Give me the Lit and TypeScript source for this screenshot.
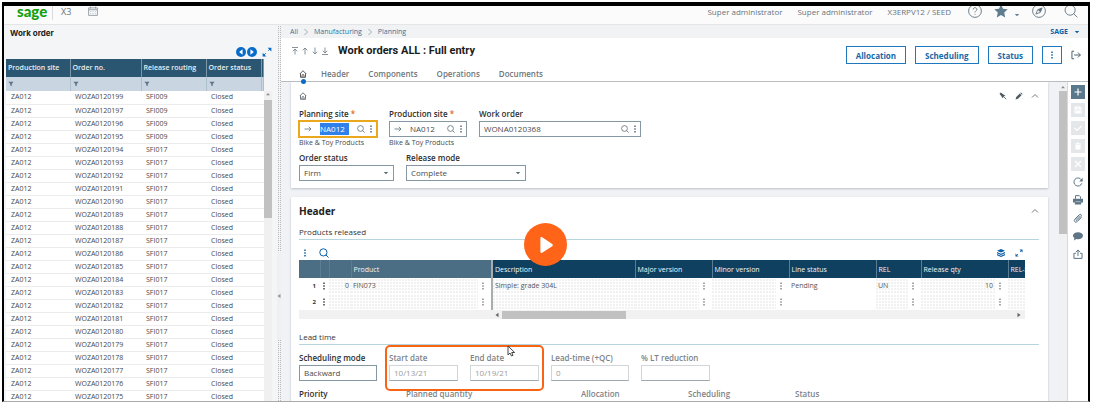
import { LitElement, html, css, svg, nothing } from "lit";
import { customElement } from "lit/decorators.js";
import { classMap } from "lit/directives/class-map.js";

const shapes: Record<string, unknown> = {
  arrow: svg`<path d="M1 8h13M9.5 3.5 14 8l-4.500 4.500" />`,
  search: svg`<circle cx="7" cy="7" r="5.800" /><path d="m11 11 4.300 4.300" />`,
  home: svg`<path d="M1.500 8 8 1.500 14.500 8M3 7v7.500h10V7M6 14.500v-3.500a2 2 0 0 1 4 0v3.500" />`,
  up: svg`<path d="M8 15V2M3.500 6.500 8 2l4.500 4.500" />`,
  down: svg`<path d="M8 1v13M3.500 9.500 8 14l4.500-4.500" />`,
  first: svg`<path d="M2 1h12M8 15V4M3.500 8.500 8 4l4.500 4.500" />`,
  last: svg`<path d="M2 15h12M8 1v11M3.500 7.500 8 12l4.500-4.500" />`,
  chevron: svg`<path d="m5 2 6 6-6 6" />`,
  collapse: svg`<path d="m2 11 6-6 6 6" />`,
  calendar: svg`<path d="M1 3h14v12H1zM1 6h14M4 1v3M12 1v3M4 9h1M7.500 9h1M11 9h1M4 12h1M7.500 12h1M11 12h1" />`,
  help: svg`<circle cx="8" cy="8" r="7.300" /><path d="M5.900 6.300c0-3 4.300-2.700 4.200-.1 0 1.400-2.100 1.700-2.100 3.300M8 11.200v1" />`,
  compass: svg`<circle cx="8" cy="8" r="7.300" /><path d="m11.500 4.500-2 5-5 2 2-5z" /><path class="solid" d="m11.500 4.500-2 5-3-3z" />`,
  star: svg`<path class="solid" d="m8 .5 2.300 5 5.400.6-4 3.700 1.100 5.500L8 12.600l-4.800 2.700 1.100-5.500-4-3.700 5.400-.6z" />`,
  caret: svg`<path class="solid" d="M2 5h12l-6 6z" />`,
  triUp: svg`<path class="solid" d="M3 11h10L8 5z" />`,
  triLeft: svg`<path class="solid" d="M12 2v12L4 8z" />`,
  triRight: svg`<path class="solid" d="M4 2v12l8-6z" />`,
  exit: svg`<path d="M5 2H1.500v12H5M5 8h10M11 4l4 4-4 4" />`,
  filter: svg`<path class="solid" d="M1 2h14l-5 6v6l-4-2V8z" />`,
  prev: svg`<circle class="solid" cx="8" cy="8" r="8" /><path class="cut" d="M10.500 3.500v9L5 8z" />`,
  next: svg`<circle class="solid" cx="8" cy="8" r="8" /><path class="cut" d="M5.500 3.500v9L11 8z" />`,
  expand: svg`<path d="m10 6 4-4M2 14l4-4" /><path class="solid" d="M9 1h6v6zM1 9v6h6z" />`,
  layers: svg`<path class="solid" d="m8 0 8 3.500L8 7 0 3.500zM0 6l8 3.500L16 6v2.300l-8 3.500-8-3.500zM0 10.200l8 3.500 8-3.500v2.300L8 16l-8-3.500z" />`,
  pin: svg`<path d="m6 6 8.500 8.500" /><path class="solid" d="M1 3.500 3.500 1l6 4.500 3 1-6 6-1-3z" />`,
  pencil: svg`<path class="solid" d="m1 15 1.500-5 7-7 3.500 3.500-7 7zM10.500 2 12 .8l3.200 3.200L14 5.500z" />`,
  plus: svg`<path class="thick" d="M8 1v14M1 8h14" />`,
  save: svg`<path class="thick" d="M2 2h10l2 2v10H2zM5 2v4h6V2" /><path class="solid" d="M4 9h8v5H4z" />`,
  check: svg`<path class="thick" d="m1 8 5 5 9-9" />`,
  trash: svg`<path class="solid" d="M2 3h12v2H2zM6 1h4v2H6zM3 6h10v9H3z" />`,
  cross: svg`<path class="thick" d="m2 2 12 12M14 2 2 14" />`,
  refresh: svg`<path d="M13.500 4.500A6.500 6.500 0 1 0 14.200 10" /><path class="solid" d="M15.500 1v6H10z" />`,
  print: svg`<path d="M4 6V1h6l2 2v3" /><path class="solid" d="M0 6h16v6h-3v3H3v-3H0z" /><path class="notch" d="M4 10h8v1.500H4z" />`,
  clip: svg`<path d="m13.500 7-6.800 6.800c-2.700 2.700-6.500-1-3.800-3.800L10 2.800c2-2 4.700.7 2.800 2.700L6.500 11.800c-1 1-2.500-.4-1.500-1.500L11 4.300" />`,
  chat: svg`<path class="solid" d="M8 2c4.500 0 8 2.400 8 5.500S12.500 13 8 13c-1 0-1.900-.1-2.700-.3L1.500 15l.7-3.800C.8 10.200 0 9 0 7.500 0 4.400 3.500 2 8 2z" />`,
  share: svg`<path d="M4.500 7H1.500v8h13V7h-3M8 11V1.500M4.500 5 8 1.500 11.500 5" />`,
  play: svg`<path class="solid" d="M3 2v12c0 1 .8 1.300 1.600.8L13.500 9c.7-.4.7-1.500 0-2L4.600 1.200C3.800.7 3 1 3 2z" />`,
  dots: svg`<path class="solid" d="M6.500 1h3v3h-3zM6.500 6.500h3v3h-3zM6.500 12h3v3h-3z" />`,
};

const icon = (name: string, size = "s8") =>
  html`<svg class="icon ${size}" viewBox="0 0 16 16" aria-hidden="true">${shapes[name]}</svg>`;

const base = css`
  * {
    box-sizing: border-box;
  }
  button,
  input,
  select {
    font: inherit;
    color: inherit;
    margin: 0;
    padding: 0;
    border: 0;
    border-radius: 0;
    background: none;
    min-width: 0;
    outline: 0;
  }
  button {
    display: flex;
    align-items: center;
    justify-content: center;
    cursor: pointer;
  }
  a {
    color: inherit;
    text-decoration: none;
  }
  .icon {
    display: block;
    flex: none;
    fill: none;
    stroke: currentColor;
    stroke-width: 1.6;
  }
  .solid {
    fill: currentColor;
    stroke: none;
  }
  .cut {
    fill: #fff;
    stroke: none;
  }
  .notch {
    fill: #fff;
    fill-opacity: 0.5;
    stroke: none;
  }
  .thick {
    stroke-width: 2.4;
  }
  .s6 {
    width: 6px;
    height: 6px;
  }
  .s8 {
    width: 8px;
    height: 8px;
  }
  .s10 {
    width: 10px;
    height: 10px;
  }
  .s14 {
    width: 14px;
    height: 14px;
  }
  .s18 {
    width: 18px;
    height: 18px;
  }
`;

@customElement("top-bar")
class TopBar extends LitElement {
  static styles = [
    base,
    css`
      :host {
        display: flex;
        align-items: flex-start;
        height: 19px;
        flex: none;
        padding: 0 10px 0 13px;
        overflow: hidden;
        background: #fbfbfb;
        border-bottom: 1px solid #e3e5e7;
        color: #6a747b;
      }
      .logo {
        font: 900 15px/10px Lato, sans-serif;
        color: #13a10e;
        width: 35px;
      }
      .product {
        border-left: 1px solid #d8dcde;
        padding-left: 8px;
        font-size: 9px;
        line-height: 12px;
        height: 14px;
        width: 36px;
      }
      .date {
        color: #98a2a9;
      }
      .session {
        display: flex;
        gap: 15px;
        margin-left: auto;
        font-size: 8px;
        line-height: 12px;
      }
      .tools {
        display: flex;
        align-items: flex-start;
        margin: -2px 0 0 17px;
        color: #5d6f7b;
      }
      .fav {
        margin-left: 12px;
        gap: 6px;
        align-items: flex-end;
        color: #5f7d8f;
      }
      .nav {
        margin: 0 18px 0 12px;
      }
      .tools .icon {
        stroke-width: 1;
      }
    `,
  ];
  render() {
    return html`
      <span class="logo">sage</span>
      <span class="product">X3</span>
      <button class="date" aria-label="Calendar">${icon("calendar", "s10")}</button>
      <div class="session">
        <span>Super administrator</span><span>Super administrator</span><span>X3ERPV12 / SEED</span>
      </div>
      <div class="tools">
        <button aria-label="Help">${icon("help", "s14")}</button>
        <button class="fav" aria-label="Favourites">${icon("star", "s14")}${icon("caret", "s6")}</button>
        <button class="nav" aria-label="Navigate">${icon("compass", "s14")}</button>
        <button aria-label="Search">${icon("search", "s14")}</button>
      </div>
    `;
  }
}

@customElement("order-list")
class OrderList extends LitElement {
  static styles = [
    base,
    css`
      :host {
        display: flex;
        flex-direction: column;
        width: 273px;
        flex: none;
        overflow: hidden;
        background: #f4f5f6;
        padding-left: 2px;
      }
      .title {
        margin: 0;
        padding: 2px 4px 0;
        font: 700 8px/12px Inter, sans-serif;
        color: #222;
      }
      .pager {
        display: flex;
        justify-content: flex-end;
        align-items: flex-end;
        gap: 1px;
        height: 20px;
        padding: 0 5px 2px 0;
        color: #0a6cc9;
      }
      .pager button:last-child {
        margin-left: 4px;
      }
      .body {
        display: flex;
        flex: 1;
        min-height: 0;
        overflow: hidden;
      }
      .scroller {
        flex: 1;
        overflow: hidden;
      }
      table {
        width: 100%;
        table-layout: fixed;
        border-collapse: collapse;
        font-size: 7px;
        background: #fff;
        color: #484848;
      }
      th,
      td {
        padding: 0 0 0 5px;
        text-align: left;
        white-space: nowrap;
        overflow: hidden;
        line-height: 12px;
      }
      th {
        height: 18px;
        padding-left: 2px;
        background: #2a5672;
        color: #e9eff3;
        font-weight: 600;
        border-right: 1px solid #7d97a7;
      }
      .filters td {
        height: 14px;
        padding-left: 2px;
        background: #c9d5e0;
        border-right: 1px solid #aebfcc;
        color: #5d7688;
      }
      .row td {
        height: 13px;
        border-bottom: 1px solid #ececec;
      }
      .site {
        width: 64px;
      }
      .number {
        width: 71px;
      }
      .routing {
        width: 65px;
      }
      .status {
        width: 55px;
      }
      .bar {
        width: 8px;
        margin: 32px 5px 0 0;
        background: #f0f0f0;
        display: flex;
        flex-direction: column;
        align-items: center;
        color: #888;
      }
      .thumb {
        width: 8px;
        flex: 0 1 118px;
        margin-top: 3px;
        background: #c1c1c1;
      }
    `,
  ];
  orders = [199, 197, 196, 195, ...Array.from({ length: 20 }, (_, i) => 194 - i)];
  render() {
    return html`
      <h2 class="title">Work order</h2>
      <div class="pager">
        <button aria-label="Previous">${icon("prev", "s10")}</button>
        <button aria-label="Next">${icon("next", "s10")}</button>
        <button aria-label="Full screen">${icon("expand", "s10")}</button>
      </div>
      <div class="body">
        <div class="scroller">
          <table>
            <thead>
              <tr>
                <th class="site">Production site</th>
                <th class="number">Order no.</th>
                <th class="routing">Release routing</th>
                <th class="status">Order status</th>
                <th aria-label="More"></th>
              </tr>
              <tr class="filters">
                ${[0, 1, 2, 3].map(() => html`<td>${icon("filter", "s6")}</td>`)}
                <td></td>
              </tr>
            </thead>
            <tbody>
              ${this.orders.map(
                (n, i) => html`<tr class="row">
                  <td>ZA012</td>
                  <td>WOZA0120${n}</td>
                  <td>${i < 4 ? "SFI009" : "SFI017"}</td>
                  <td>Closed</td>
                  <td></td>
                </tr>`
              )}
            </tbody>
          </table>
        </div>
        <div class="bar">${icon("triUp", "s6")}<div class="thumb"></div></div>
      </div>
    `;
  }
}

@customElement("page-head")
class PageHead extends LitElement {
  static styles = [
    base,
    css`
      :host {
        display: block;
        flex: none;
        background: #fff;
        border-bottom: 1px solid #b9bdc0;
      }
      .crumbs {
        display: flex;
        align-items: center;
        gap: 4px;
        height: 13px;
        padding: 0 8px 0 9px;
        background: #f0f2f4;
        font-size: 7px;
        color: #33739c;
      }
      .crumbs .icon {
        color: #8a949b;
      }
      .folder {
        margin-left: auto;
        gap: 6px;
        font-weight: 700;
        color: #0a5fa5;
      }
      .folder .icon {
        color: #0a5fa5;
      }
      .main {
        display: flex;
        justify-content: space-between;
        align-items: flex-start;
        padding: 0 7px 0 10px;
      }
      .line {
        display: flex;
        align-items: center;
        gap: 2px;
        height: 25px;
        color: #6b7880;
      }
      h1 {
        margin: 0 0 0 7px;
        font: 700 11px/16px Roboto, sans-serif;
        color: #1c1c1c;
      }
      .tabs {
        display: flex;
        height: 18px;
        gap: 19px;
        padding-left: 8px;
        font-size: 8px;
        font-weight: 600;
        color: #6f777c;
      }
      .tabs a {
        display: flex;
        align-items: center;
        position: relative;
        padding-top: 3px;
      }
      .home {
        margin-right: -5px;
        color: #333;
      }
      .home::after {
        content: "";
        position: absolute;
        left: 2px;
        bottom: -3px;
        width: 5px;
        height: 5px;
        border-radius: 50%;
        background: #0a6cc9;
      }
      .actions {
        display: flex;
        align-items: center;
        gap: 9px;
        padding-top: 8px;
        color: #4f626e;
      }
      .action {
        height: 18px;
        padding: 0 9px;
        border: 1px solid #1f77bd;
        color: #1668a8;
        font-size: 8px;
        font-weight: 700;
      }
      .more {
        padding: 0 5px;
      }
    `,
  ];
  render() {
    return html`
      <nav class="crumbs">
        <a href="#all">All</a>${icon("chevron")}<a href="#manufacturing">Manufacturing</a>${icon("chevron")}<a
          href="#planning"
          >Planning</a
        >
        <button class="folder">SAGE ${icon("caret", "s6")}</button>
      </nav>
      <div class="main">
        <div>
          <div class="line">
            <button aria-label="First">${icon("first")}</button>
            <button aria-label="Previous">${icon("up")}</button>
            <button aria-label="Next">${icon("down")}</button>
            <button aria-label="Last">${icon("last")}</button>
            <h1>Work orders ALL : Full entry</h1>
          </div>
          <nav class="tabs">
            <a class="home" href="#home" aria-label="Home">${icon("home")}</a>
            ${["Header", "Components", "Operations", "Documents"].map((t) => html`<a href="#${t}">${t}</a>`)}
          </nav>
        </div>
        <div class="actions">
          ${["Allocation", "Scheduling", "Status"].map((t) => html`<button class="action">${t}</button>`)}
          <button class="action more" aria-label="More">${icon("dots")}</button>
          <button aria-label="Exit">${icon("exit", "s10")}</button>
        </div>
      </div>
    `;
  }
}

interface Column {
  key: string;
  label: string;
  menu?: boolean;
  plain?: boolean;
  right?: boolean;
}

@customElement("product-grid")
class ProductGrid extends LitElement {
  static styles = [
    base,
    css`
      :host {
        display: block;
        margin-right: 14px;
      }
      .tools {
        display: flex;
        align-items: center;
        gap: 10px;
        height: 20px;
        padding: 5px 2px 0;
        color: #0a5fa5;
      }
      .tools .spacer {
        flex: 1;
      }
      table {
        width: 100%;
        table-layout: fixed;
        border-collapse: collapse;
        font-size: 7px;
        color: #555;
      }
      th {
        height: 18px;
        padding: 0 0 0 2px;
        overflow: hidden;
        white-space: nowrap;
        text-align: left;
        font-weight: 500;
        color: #f2f6f8;
        background: #0f4060;
        border-right: 1px solid #5c7c92;
      }
      th:last-child {
        border-right: 0;
      }
      .lock {
        background: #4b6e85;
      }
      .product {
        border-right: 2px solid #a8adb0;
      }
      td {
        height: 16px;
        padding: 0 0 1px;
      }
      .cell {
        display: flex;
        align-items: center;
        height: 15px;
      }
      .text {
        flex: 1;
        height: 14px;
        line-height: 14px;
        padding: 0 2px;
        overflow: hidden;
        white-space: nowrap;
        background: repeating-linear-gradient(90deg, #fff0 0 2px, #fff 2px 3px),
          repeating-linear-gradient(#f1f1f1 0 2px, #fff 2px 3px);
      }
      .plain {
        background: none;
      }
      .right {
        text-align: right;
      }
      .index {
        font-size: 6px;
        font-weight: 700;
        padding-right: 4px;
        color: #333;
      }
      .menu {
        width: 13px;
        padding-right: 3px;
        color: #8a8a8a;
      }
      .line-menu {
        color: #444;
      }
      .c-n {
        width: 21px;
      }
      .c-m {
        width: 9px;
      }
      .c-q {
        width: 22px;
      }
      .c-product {
        width: 141px;
      }
      .c-desc {
        width: 143px;
      }
      .c-major,
      .c-minor {
        width: 77px;
      }
      .c-status {
        width: 87px;
      }
      .c-rel {
        width: 45px;
      }
      .c-qty {
        width: 87px;
      }
      .bar {
        display: flex;
        align-items: center;
        height: 9px;
        padding: 0 3px 0 195px;
        background: #f1f1f1;
        color: #666;
      }
      .thumb {
        width: 124px;
        height: 8px;
        margin: 0 auto 0 2px;
        background: #c1c1c1;
      }
    `,
  ];
  columns: Column[] = [
    { key: "product", label: "Product", menu: true },
    { key: "desc", label: "Description" },
    { key: "major", label: "Major version", menu: true },
    { key: "minor", label: "Minor version", menu: true },
    { key: "status", label: "Line status", plain: true },
    { key: "rel", label: "REL", menu: true },
    { key: "qty", label: "Release qty", menu: true, right: true },
    { key: "stk", label: "REL-S" },
  ];
  rows: Record<string, string>[] = [
    { level: "0", product: "FIN073", desc: "Simple: grade 304L", status: "Pending", rel: "UN", qty: "10" },
    {},
  ];
  render() {
    return html`
      <div class="tools">
        <button aria-label="Grid menu">${icon("dots")}</button>
        <button aria-label="Search">${icon("search", "s10")}</button>
        <span class="spacer"></span>
        <button aria-label="Layers">${icon("layers")}</button>
        <button aria-label="Full screen">${icon("expand")}</button>
      </div>
      <table>
        <thead>
          <tr>
            <th class="lock c-n" aria-label="Line"></th>
            <th class="lock c-m" aria-label="Menu"></th>
            <th class="lock c-q" aria-label="Level"></th>
            ${this.columns.map(
              (c) => html`<th class="c-${c.key} ${c.key === "product" ? "lock product" : ""}">${c.label}</th>`
            )}
          </tr>
        </thead>
        <tbody>
          ${this.rows.map(
            (r, i) => html`<tr>
              <td><div class="cell"><span class="text plain right index">${i + 1}</span></div></td>
              <td>
                <div class="cell"><button class="line-menu" aria-label="Line menu">${icon("dots")}</button></div>
              </td>
              <td><div class="cell"><span class="text right">${r.level ?? nothing}</span></div></td>
              ${this.columns.map(
                (c) => html`<td class=${c.key === "product" ? "product" : ""}>
                  <div class="cell">
                    <span class=${classMap({ text: true, plain: !!c.plain, right: !!c.right })}
                      >${r[c.key] ?? nothing}</span
                    >
                    ${c.menu
                      ? html`<button class="menu" aria-label="${c.label} menu">${icon("dots")}</button>`
                      : nothing}
                  </div>
                </td>`
              )}
            </tr>`
          )}
        </tbody>
      </table>
      <div class="bar">${icon("triLeft", "s6")}<div class="thumb"></div>${icon("triRight", "s6")}</div>
    `;
  }
}

@customElement("order-form")
class OrderForm extends LitElement {
  static styles = [
    base,
    css`
      :host {
        display: block;
        flex: 1;
        min-width: 0;
        overflow: hidden;
        padding: 0 11px 0 10px;
        background: #f0f2f5;
      }
      .card {
        padding: 7px 9px 7px 8px;
        margin-bottom: 9px;
        background: #fff;
        box-shadow: 0 1px 2px #b9c0c6;
      }
      .bar {
        display: flex;
        align-items: center;
        justify-content: space-between;
        height: 14px;
        color: #4f5b63;
      }
      .tools {
        display: flex;
        gap: 8px;
      }
      h2 {
        margin: 0;
        font-size: 10px;
        line-height: 14px;
        color: #222;
      }
      h3 {
        margin: 8px 0 0;
        font-size: 8px;
        line-height: 12px;
        height: 14px;
        font-weight: 500;
        color: #333;
        border-bottom: 1px solid #b5d5df;
      }
      .lead {
        margin: 12px 0 7px;
      }
      .fields {
        display: flex;
        gap: 12px;
      }
      .first {
        margin-top: 5px;
      }
      .second {
        margin-top: 3px;
      }
      .third {
        margin-top: 7px;
      }
      .field {
        display: flex;
        flex-direction: column;
        font-size: 8px;
        color: #4a4a4a;
      }
      label {
        line-height: 12px;
        margin-bottom: 1px;
        font-weight: 600;
        color: #2e2e2e;
        white-space: nowrap;
      }
      .star {
        color: #e2681c;
      }
      .hint {
        line-height: 12px;
        font-size: 7px;
      }
      .box {
        display: flex;
        align-items: center;
        height: 16px;
        padding: 0 4px;
        border: 1px solid #8597a3;
        background: #fff;
        color: #5a6e7a;
        gap: 2px;
      }
      .box input,
      .box select {
        flex: 1;
        width: 100%;
        appearance: none;
        line-height: 14px;
        color: #4a4a4a;
      }
      .box .open {
        margin-right: 6px;
      }
      .box .find {
        margin-left: 6px;
      }
      .box .dots {
        margin-right: -3px;
      }
      .focus {
        border-color: #e9a81e;
        box-shadow: 0 0 0 1px #e9a81e;
      }
      .focus input {
        background: #2f80ea;
        color: #fff;
        height: 12px;
        line-height: 12px;
      }
      .off label {
        color: #7d8388;
      }
      .off .box {
        border-color: #d2d6d9 #d2d6d9 #9fa9b0;
      }
      .off input {
        color: #9a9a9a;
      }
      .w78 {
        width: 78px;
      }
      .w69 {
        width: 69px;
      }
      .w95 {
        width: 95px;
      }
      .w120 {
        width: 120px;
      }
      .w162 {
        width: 162px;
      }
      .push {
        margin-left: 68px;
      }
      .dates {
        display: flex;
        gap: 12px;
        position: relative;
      }
      .dates::after {
        content: "";
        position: absolute;
        inset: -7px -5px -10px -4px;
        border: 2px solid #f96314;
        border-radius: 5px;
      }
      .pointer {
        position: absolute;
        left: 118px;
        top: -7px;
        width: 9px;
        height: 12px;
        z-index: 1;
      }
    `,
  ];

  lookup(id: string, label: string, value: string, focus = false) {
    return html`<div class="field w78">
      <label for=${id}>${label} <span class="star">*</span></label>
      <div class=${classMap({ box: true, focus })}>
        <button class="open" aria-label="Open ${label}">${icon("arrow")}</button>
        <input id=${id} .value=${value} />
        <button class="find" aria-label="Search ${label}">${icon("search")}</button>
        <button class="dots" aria-label="${label} menu">${icon("dots")}</button>
      </div>
      <span class="hint">Bike &amp; Toy Products</span>
    </div>`;
  }
  drop(id: string, label: string, value: string, width: string) {
    return html`<div class="field ${width}">
      <label for=${id}>${label}</label>
      <div class="box">
        <select id=${id}>
          <option>${value}</option>
        </select>
        ${icon("caret", "s6")}
      </div>
    </div>`;
  }
  text(id: string, label: string, value: string, kind: string) {
    return html`<div class="field ${kind}">
      <label for=${id}>${label}</label>
      <div class="box"><input id=${id} .value=${value} /></div>
    </div>`;
  }
  render() {
    return html`
      <section class="card">
        <div class="bar">
          ${icon("home")}
          <div class="tools">
            <button aria-label="Pin">${icon("pin")}</button>
            <button aria-label="Edit">${icon("pencil")}</button>
            <button aria-label="Collapse">${icon("collapse")}</button>
          </div>
        </div>
        <div class="fields first">
          ${this.lookup("planning", "Planning site", "NA012", true)}
          ${this.lookup("production", "Production site", "NA012")}
          <div class="field w162">
            <label for="order">Work order</label>
            <div class="box">
              <input id="order" .value=${"WONA0120368"} />
              <button class="find" aria-label="Search work order">${icon("search")}</button>
              <button class="dots" aria-label="Work order menu">${icon("dots")}</button>
            </div>
          </div>
        </div>
        <div class="fields second">
          ${this.drop("status", "Order status", "Firm", "w95")} ${this.drop("mode", "Release mode", "Complete", "w120")}
        </div>
      </section>
      <section class="card">
        <div class="bar">
          <h2>Header</h2>
          <button aria-label="Collapse">${icon("collapse")}</button>
        </div>
        <h3>Products released</h3>
        <product-grid></product-grid>
        <h3 class="lead">Lead time</h3>
        <div class="fields">
          ${this.text("scheduling", "Scheduling mode", "Backward", "w78")}
          <div class="dates">
            ${this.text("start", "Start date", "10/13/21", "w69 off")}
            ${this.text("end", "End date", "10/19/21", "w69 off")}
            <svg class="pointer" viewBox="0 0 9 12" aria-hidden="true">
              <path d="M1 1v9l2-2 1.500 3 1.500-.7L4.700 7.500h3z" fill="#fff" stroke="#444" />
            </svg>
          </div>
          ${this.text("lead", "Lead-time (+QC)", "0", "w78 off")}
          ${this.text("reduction", "% LT reduction", "", "w69 off")}
        </div>
        <div class="fields third">
          ${this.text("priority", "Priority", "", "w95")}
          ${this.text("planned", "Planned quantity", "", "w95 off")}
          ${this.text("allocation", "Allocation", "", "w95 off push")}
          ${this.text("plan", "Scheduling", "", "w95 off")}
          ${this.text("state", "Status", "", "w95 off")}
        </div>
      </section>
    `;
  }
}

@customElement("side-tools")
class SideTools extends LitElement {
  static styles = [
    base,
    css`
      :host {
        display: flex;
        flex-direction: column;
        align-items: center;
        gap: 4px;
        width: 21px;
        flex: none;
        padding: 3px 1px 0 0;
        background: #fff;
        border-left: 1px solid #d5d9dc;
        color: #5d7585;
      }
      button {
        width: 14px;
        height: 14px;
      }
      .primary {
        background: #5a788c;
        color: #fff;
      }
      .disabled {
        background: #e3e7ea;
        color: #fff;
      }
    `,
  ];
  tools = ["plus", "save", "check", "trash", "cross", "refresh", "print", "clip", "chat", "share"];
  render() {
    return this.tools.map(
      (t, i) => html`<button
        class=${classMap({ primary: i === 0, disabled: i > 0 && i < 5 })}
        ?disabled=${i > 0 && i < 5}
        aria-label=${t}
      >
        ${icon(t, i < 5 ? "s8" : "s10")}
      </button>`
    );
  }
}

@customElement("app-root")
class AppRoot extends LitElement {
  static styles = [
    base,
    css`
      :host {
        display: flex;
        box-sizing: border-box;
        height: 100vh;
        padding: 2px 5px 5px 2px;
        background: #fff;
        font-family: "Open Sans", sans-serif;
      }
      .frame {
        position: relative;
        display: flex;
        flex-direction: column;
        flex: 1;
        min-width: 0;
        overflow: hidden;
        border: 2px solid #000;
        border-top-width: 4px;
        border-bottom: 1px solid #aaa;
      }
      .panes {
        display: flex;
        flex: 1;
        min-height: 0;
      }
      .splitter {
        display: flex;
        align-items: center;
        width: 4px;
        flex: none;
        background: repeating-linear-gradient(#f4f5f6 0 1px, #fff0 1px 2px),
          repeating-linear-gradient(90deg, #f4f5f6 0 1px, #b4b8bb 1px 2px);
      }
      .handle {
        display: flex;
        align-items: center;
        height: 88px;
        margin-top: 166px;
        background: #eef0f1;
        color: #999;
        width: 4px;
        justify-content: center;
      }
      .record {
        display: flex;
        flex-direction: column;
        flex: 1;
        min-width: 0;
      }
      .work {
        display: flex;
        flex: 1;
        min-height: 0;
      }
      .scrollbar {
        display: flex;
        flex-direction: column;
        align-items: center;
        width: 8px;
        flex: none;
        padding-top: 2px;
        background: #f0f1f3;
        color: #888;
      }
      .thumb {
        width: 8px;
        flex: 0 1 143px;
        margin-top: 1px;
        background: #c1c1c1;
      }
      .play {
        position: absolute;
        left: 50%;
        top: 217px;
        width: 43px;
        height: 43px;
        margin-left: -22px;
        border-radius: 50%;
        background: #ff6418;
        color: #fff;
      }
    `,
  ];
  render() {
    return html`
      <div class="frame">
        <top-bar></top-bar>
        <div class="panes">
          <order-list></order-list>
          <div class="splitter"><div class="handle">${icon("triLeft", "s6")}</div></div>
          <main class="record">
            <page-head></page-head>
            <div class="work">
              <order-form></order-form>
              <div class="scrollbar">${icon("triUp", "s6")}<div class="thumb"></div></div>
              <side-tools></side-tools>
            </div>
          </main>
        </div>
        <button class="play" aria-label="Play video">${icon("play", "s18")}</button>
      </div>
    `;
  }
}
